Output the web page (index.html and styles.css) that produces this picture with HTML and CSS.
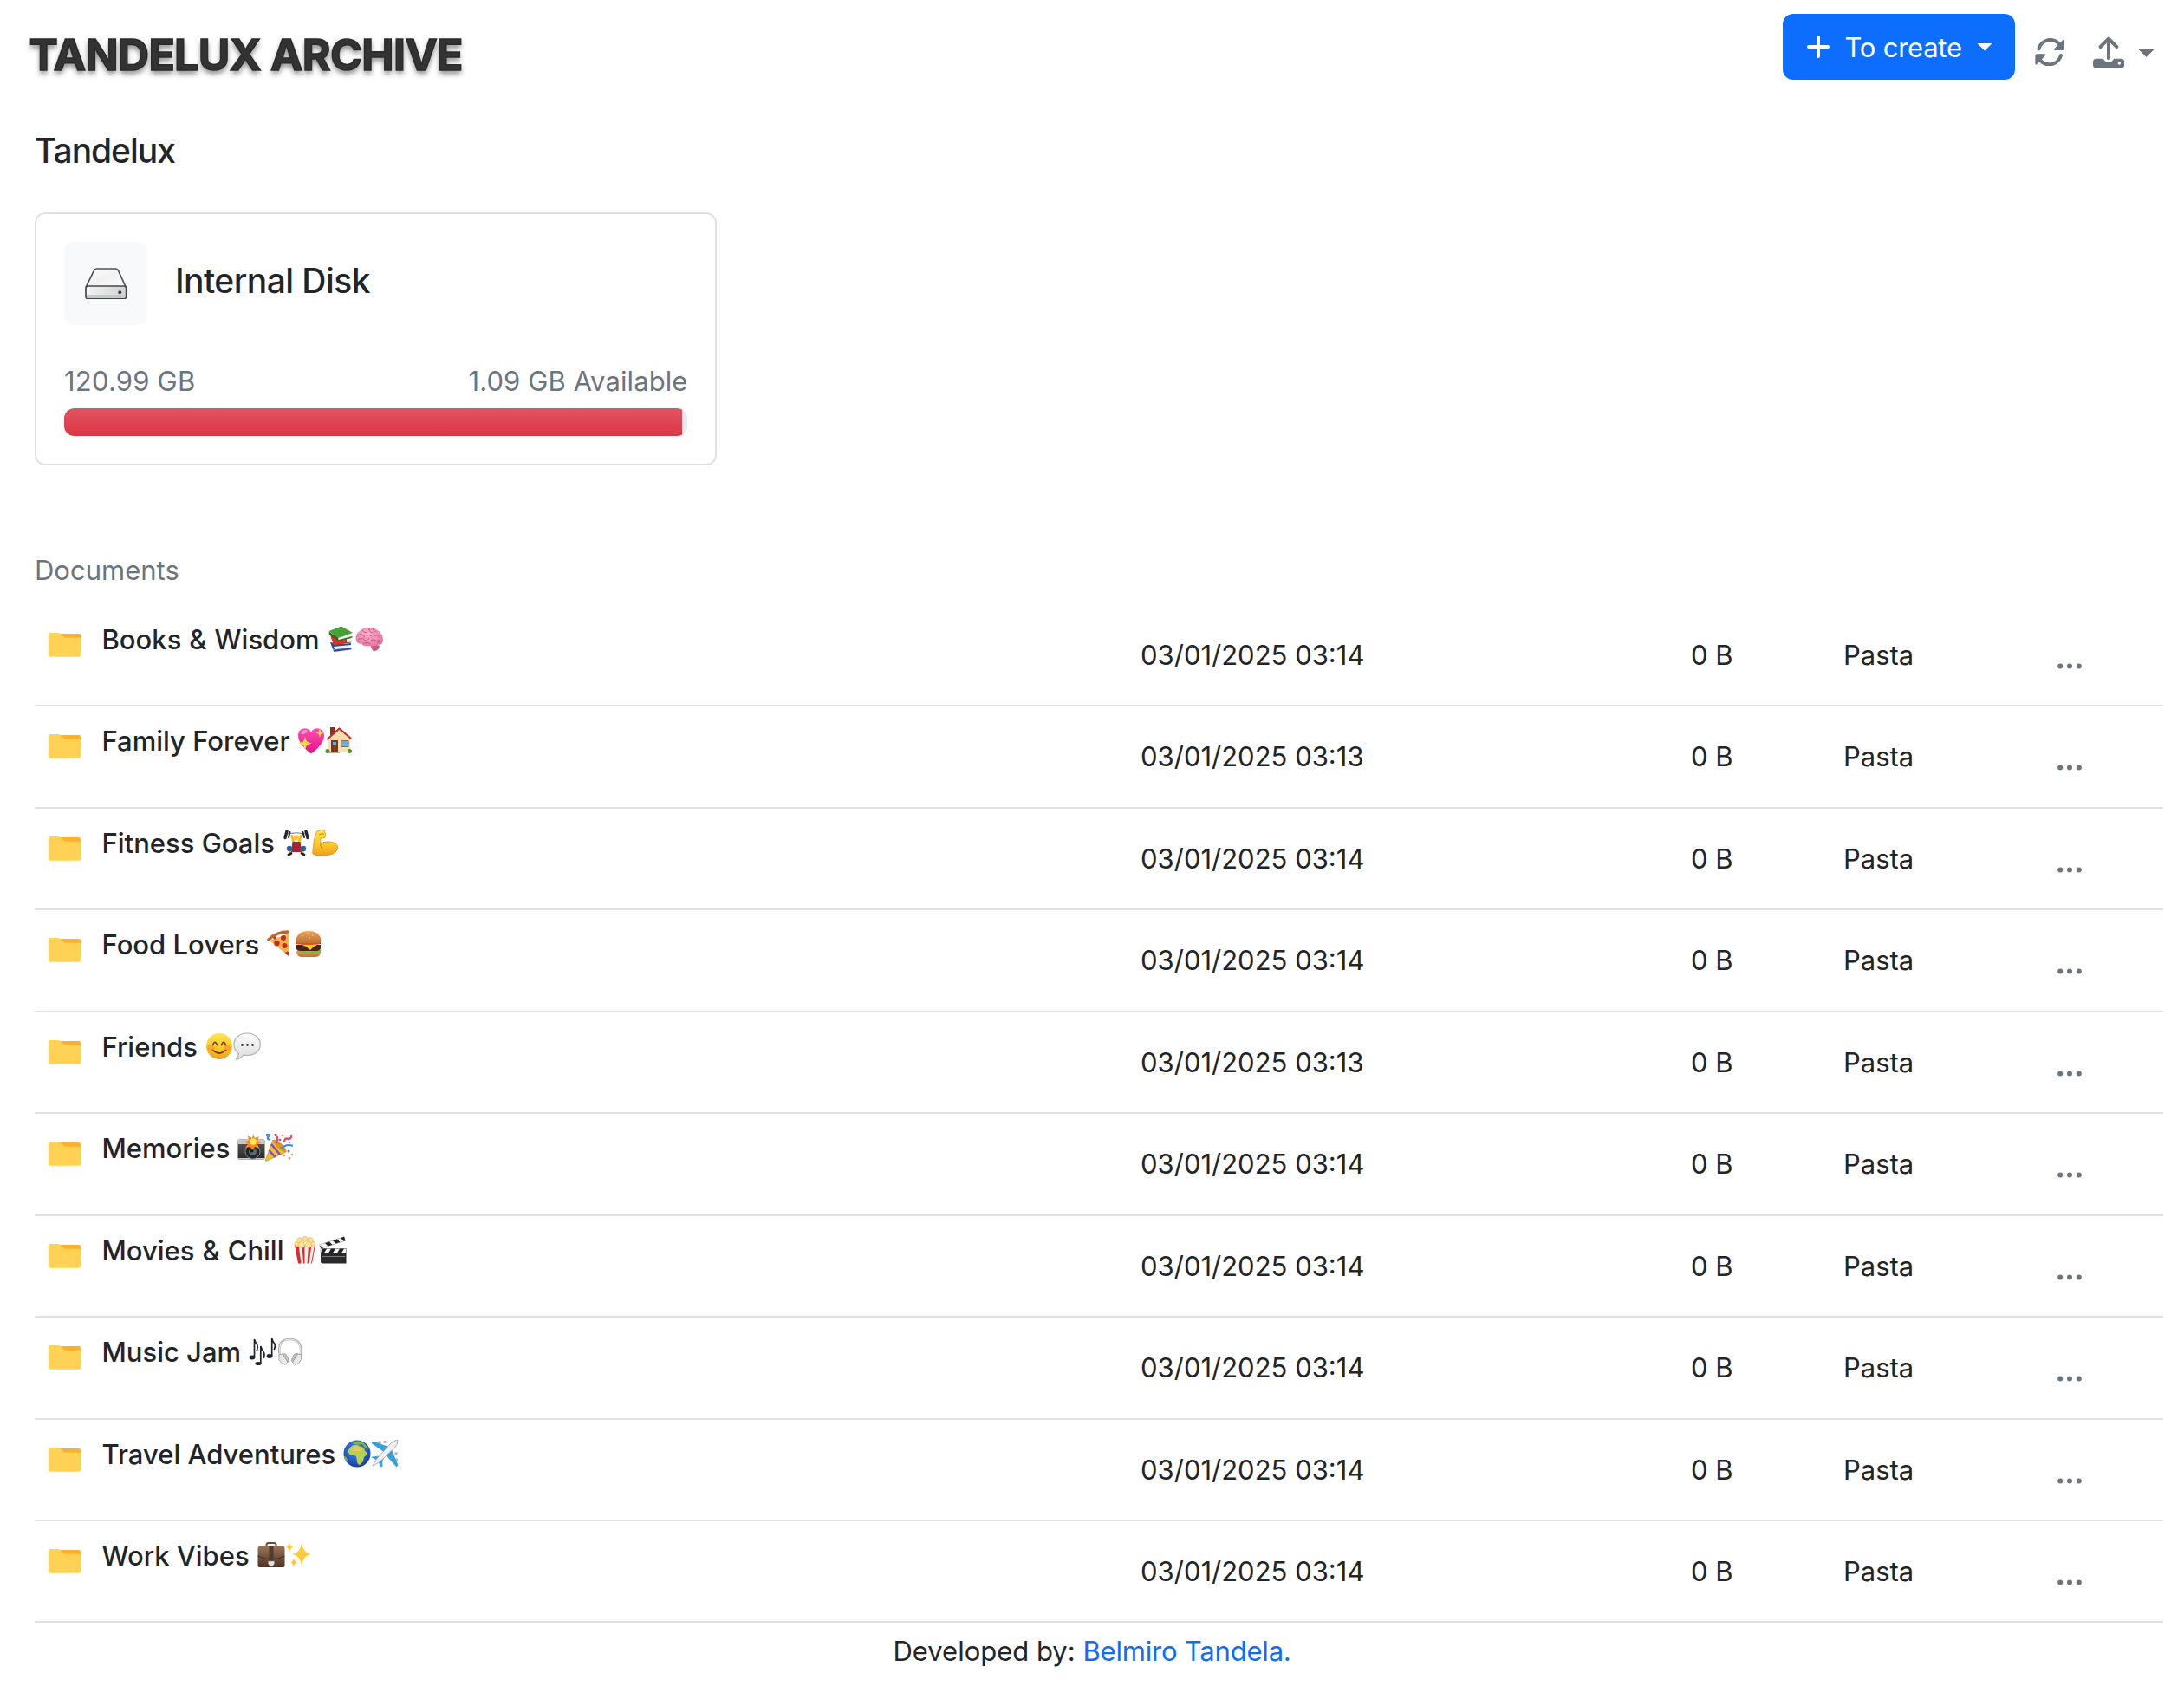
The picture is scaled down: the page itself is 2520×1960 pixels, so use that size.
FILE: index.html
```html
<!DOCTYPE html>
<html lang="en">
<head>
<meta charset="utf-8">
<title>Tandelux Archive</title>
<link rel="stylesheet" href="styles.css">
</head>
<body>
<svg class="sprite" aria-hidden="true">
  <defs>
    <linearGradient id="g-face" x1="0" y1="0" x2="0" y2="1"><stop offset="0" stop-color="#ffe44d"/><stop offset=".6" stop-color="#fdc52c"/><stop offset="1" stop-color="#ee9c1e"/></linearGradient>
    <linearGradient id="g-bun" x1="0" y1="0" x2="0" y2="1"><stop offset="0" stop-color="#eba45a"/><stop offset="1" stop-color="#bf7033"/></linearGradient>
    <linearGradient id="g-case" x1="0" y1="0" x2="0" y2="1"><stop offset="0" stop-color="#97745a"/><stop offset="1" stop-color="#4d3222"/></linearGradient>
    <linearGradient id="g-cam" x1="0" y1="0" x2="0" y2="1"><stop offset="0" stop-color="#5a5a5c"/><stop offset="1" stop-color="#2a2a2c"/></linearGradient>
    <linearGradient id="g-heart" x1="0" y1="0" x2="0" y2="1"><stop offset="0" stop-color="#ff4fb0"/><stop offset="1" stop-color="#e5108c"/></linearGradient>
    <radialGradient id="g-brain" cx=".45" cy=".35" r=".7"><stop offset="0" stop-color="#ffb3cf"/><stop offset="1" stop-color="#e0729c"/></radialGradient>
    <radialGradient id="g-sea" cx=".45" cy=".35" r=".65"><stop offset="0" stop-color="#3f8cf0"/><stop offset="1" stop-color="#1540a8"/></radialGradient>
    <linearGradient id="g-white" x1="0" y1="0" x2="0" y2="1"><stop offset="0" stop-color="#fdfdfd"/><stop offset="1" stop-color="#dcdcde"/></linearGradient>
  </defs>
  <symbol id="folder" viewBox="78 300 111 83.500">
    <path fill="#ffb02a" d="M112 303h71q6 0 6 6v20h-77z"/>
    <path fill="#ffd255" d="M78 306q0-6 6-6h26q6 0 10 4l9 9q4 4 9 4h45q6 0 6 5v55q0 6-6 6H84q-6 0-6-6z"/>
  </symbol>
  <symbol id="dots" viewBox="0 0 28 7"><g fill="#6c757d"><circle cx="3.200" cy="3.500" r="3"/><circle cx="14" cy="3.500" r="3"/><circle cx="24.800" cy="3.500" r="3"/></g></symbol>
  <symbol id="books" viewBox="0 0 32 32">
    <path fill="#2a4f9e" d="M3 20l3 8 21-1v-6l-12 1z"/><path fill="#f3f3f1" d="M7 25l20-2v3.300l-18 1.700z"/><path fill="#2a4f9e" d="M6 28.500l21.500-2v1.800L7.500 31z"/>
    <path fill="#cf2a22" d="M3 11l4 12 20-2.500V13z"/><path fill="#f3eeea" d="M22 16l5-1v4.500l-5 .8z"/><path fill="#d93229" d="M4 14l17 2v5L7 23z"/>
    <path fill="#26691f" d="M1.500 7.500L12 15v3L2 11z"/><path fill="#f2f2ee" d="M12 14.500l16-4.500v3.500L13 18z"/><path fill="#27751f" d="M12 17.200l16.500-4.200v1.500L12.500 18.800z"/><path fill="#46a235" d="M1.500 7L16 1.500 29 9l-17 6z"/>
  </symbol>
  <symbol id="brain" viewBox="0 0 32 32">
    <path fill="#c9587f" d="M17 23q5-2 11 1-1 6-7 6-1 0-3-5z"/>
    <path fill="url(#g-brain)" d="M1 18Q-1 11 5 7 9 2.500 16 3.500 22 2 27 7q5 4 5 10 0 6-6 6-5 3-9 1-8 1-9-2-6 0-7-4z"/>
    <path fill="none" stroke="#c75682" stroke-width="1" stroke-linecap="round" d="M3 12q3-3 6 0m-1-6q2 4 6 2m-11 9q4-3 7 0t6-2M13 12q3-2 6 1m-3-9q-1 4 4 5m0-5q0 3 4 4m-3 5q4-3 7 1m-10 4q4-3 6 1m-15 3q4-4 8 0m8-3q2-3 5 0M10 12v3m14 3q3 1 3 3"/>
  </symbol>
  <symbol id="heart" viewBox="0 0 32 32">
    <path fill="url(#g-heart)" d="M16 31.500C6 24 1 17 1 10.500 1 1.500 12-.5 16 6.500c4-7 15-5 15 4C31 17 26 24 16 31.500z"/>
    <ellipse cx="8" cy="6.500" rx="4" ry="2" fill="#ff8fcb" transform="rotate(-30 8 6.500)"/>
    <path fill="#ffd84a" d="M9 12l2 5.500 6 2-6 2-2 5.500-2-5.500-6-2 6-2zM26 2.500l1.300 3.700L31 7.500l-3.700 1.300L26 12.500l-1.300-3.700L21 7.500l3.700-1.300z"/>
  </symbol>
  <symbol id="house" viewBox="0 0 32 32">
    <path fill="#8d2f26" d="M6 1h6v9H6z"/><path fill="#f7dfb0" d="M4 14L17 3l12 11v16H4z"/>
    <path fill="none" stroke="#c92f29" stroke-width="2.200" stroke-linejoin="round" stroke-linecap="round" d="M3 14.500L16.500 2.500 29.500 13.500"/>
    <path fill="#7b3820" d="M7 16h8v14H7z"/><path fill="#64afe8" d="M9 18h4v4H9zM19.500 17h7v6h-7z"/><path fill="none" stroke="#8b6a48" d="M19 16.500h8v7h-8z"/>
    <path fill="#b9a68b" d="M5 29.500h12V31H5z"/><g fill="#4c942f"><circle cx="3" cy="28.500" r="2.500"/><circle cx="28.500" cy="28.500" r="2.500"/></g>
  </symbol>
  <symbol id="lifter" viewBox="0 0 32 32">
    <path stroke="#777" stroke-width="1" d="M4 6Q16 3.500 28 6" fill="none"/>
    <g stroke="#25282e" stroke-linecap="round"><path stroke-width="3.400" d="M3 10.500L5 3M29 10.500L27 3"/><path stroke-width="2" d="M7 10l1.500-6m16.500 6l-1.500-6"/></g>
    <path fill="none" stroke="#f6b92c" stroke-width="2.600" stroke-linecap="round" d="M10.500 8l2.500 8m8.500-8l-2.500 8"/><circle cx="16" cy="10.500" r="3.200" fill="#ffc62e"/>
    <path fill="#a8232f" d="M11.500 15h9l1.500 12H10z"/><path fill="none" stroke="#f6b92c" stroke-width="2.600" d="M8.500 22v6m15-6v6"/><circle cx="8" cy="23" r="3.200" fill="#2465ad"/><circle cx="24" cy="23" r="3.200" fill="#2465ad"/>
    <path stroke="#222" stroke-width="2.800" stroke-linecap="round" d="M7 30l3-1.500m12 0l3 1.500"/>
  </symbol>
  <symbol id="muscle" viewBox="0 0 32 32">
    <path fill="url(#g-face)" stroke="#dc9218" stroke-width=".8" d="M8 3q4-3 8-1 3 5 1 8-3 2-5 1 0 5-1 8 4-5 10-4 9 0 11 6 0 5-6 8-11 4-21 1-3 0-2-5 1-15 5-22z"/>
    <path fill="none" stroke="#c67c12" d="M10 7q3-2 6-1m-5 13q2 1 2 4"/>
  </symbol>
  <symbol id="pizza" viewBox="0 0 32 32">
    <path fill="#f3b64d" d="M3 12L25 4v26z"/><path fill="none" stroke="#b8692c" stroke-width="3.500" stroke-linecap="round" d="M2 11Q11 2 24.500 2"/>
    <g fill="#c92a22"><circle cx="11.500" cy="15" r="3.200"/><circle cx="19" cy="9" r="3"/><circle cx="20.500" cy="18" r="3"/><path d="M25 25a3.500 3.500 0 0 0-4 1l4 4zM7 9a2.500 2.500 0 0 1 4-1l-2 3z"/></g>
  </symbol>
  <symbol id="burger" viewBox="0 0 32 32">
    <path fill="url(#g-bun)" d="M2 24h28q0 7-6 7H8q-6 0-6-7z"/><path fill="#6fc32b" d="M1.500 22q4 2 7 1l7 2 7-1 8-2-1 4q-5 1-7 0-3 2-6 0-4 1-6 0-5 0-9-4z"/>
    <path fill="#4a2416" d="M2 17h28v4q-1 3-5 3H7q-5 0-5-3z"/><path fill="#ffca28" d="M4 15l24 1-6 3-4 4-5-4z"/><path fill="#e2483a" d="M2 13q14 4 28 0v3q-14 2-28 0z"/>
    <path fill="url(#g-bun)" d="M1.500 13Q2 1 16 1t14.500 12q-2 2-7 2H8q-5 0-6.500-2z"/><g fill="#f9d59a"><circle cx="9" cy="6" r=".8"/><circle cx="15" cy="4" r=".8"/><circle cx="21" cy="6" r=".8"/><circle cx="17" cy="9" r=".8"/></g>
  </symbol>
  <symbol id="smile" viewBox="0 0 32 32">
    <circle cx="16" cy="16" r="15" fill="url(#g-face)"/><g fill="#f4812d" opacity=".45"><ellipse cx="6.500" cy="18" rx="4.500" ry="3.800"/><ellipse cx="25.500" cy="18" rx="4.500" ry="3.800"/></g>
    <path fill="none" stroke="#6b4210" stroke-width="1.700" stroke-linecap="round" d="M8.500 14.500q2.500-6.500 5 0m5 0q2.500-6.500 5 0M8.500 20.500q7.500 7 15 0"/>
  </symbol>
  <symbol id="bubble" viewBox="0 0 32 32">
    <path fill="url(#g-white)" stroke="#b1b1b4" stroke-width="1.200" d="M16 1c9 0 15.300 5.500 15.300 13S25 26.500 16 26.500q-2 0-4-.3-4 4.500-8.500 5 3-3 2.500-7.200Q1 20.500 1 14C1 6.500 7 1 16 1z"/>
    <g fill="#333"><circle cx="10.500" cy="14.500" r="1.400"/><circle cx="16.500" cy="14.500" r="1.400"/><circle cx="22.500" cy="14.500" r="1.400"/></g>
  </symbol>
  <symbol id="camera" viewBox="0 0 32 32">
    <path fill="url(#g-cam)" d="M.5 8Q.5 6.500 2 6.500h28q1.500 0 1.500 1.500v20q0 1.500-1.500 1.500H2Q.5 29.500.5 28z"/><path fill="#c9c9c9" d="M.5 8Q.5 6.500 2 6.500h28q1.500 0 1.500 1.500v4H.5zM.5 28h31q0 1.500-1.500 1.500H2Q.5 29.500.5 28z"/>
    <circle cx="17.500" cy="20.500" r="8.500" fill="#222428" stroke="#85888c"/><circle cx="17.500" cy="20.500" r="4.500" fill="#5e6871"/><circle cx="16.500" cy="19.500" r="2" fill="#111820"/>
    <path fill="#f98a1b" d="M18 0l2 5 5-2-2 5 5 2-5 2 2 5-5-2-3 4-2-4-6 1 3-4-4-3 5-1-1-6 5 3z"/><circle cx="18" cy="9" r="3.800" fill="#ffe65a"/>
  </symbol>
  <symbol id="party" viewBox="0 0 32 32">
    <path fill="#efc12f" stroke="#bd8620" stroke-width=".7" d="M9 7l15 14L1 31.500q-2-.5 0-3z"/><path fill="none" stroke="#8c48c2" stroke-width="2.600" d="M7 12l10 12M4.500 19l7 8"/>
    <ellipse cx="17" cy="14" rx="3.200" ry="10" transform="rotate(-46 17 14)" fill="#d99723"/>
    <path fill="none" stroke="#e64578" stroke-width="2.400" d="M11 0q5 4 2 11M22 10q0-6 4-4 5 0 4-5"/><path fill="none" stroke="#3989dd" stroke-width="2.200" d="M18 17q7-6 14-3M1 1q5-1 3 2-3 2 1 4"/>
    <g><circle cx="17" cy="7" r="1.300" fill="#3a6fd6"/><circle cx="20" cy="2" r="1.300" fill="#e68a2b"/><circle cx="28" cy="10" r="1" fill="#3a6fd6"/><circle cx="27" cy="20" r="1.500" fill="#4576d8"/><circle cx="31" cy="24" r="1.200" fill="#e5993a"/><circle cx="28" cy="28" r="1.500" fill="#ee8ba5"/><circle cx="22" cy="25" r="1.200" fill="#e5993a"/></g>
  </symbol>
  <symbol id="popcorn" viewBox="0 0 32 32">
    <path fill="#f7f0ea" d="M4 10h24l-4 21.500H8z"/><path fill="#d92c31" d="M4 10h4.500L11.500 31.500H8zM12.500 10h3v21.500H14zM20 10h3.500l-3 21.500h-2zM27 10h1l-4 21.500h-1z"/>
    <g fill="#fbe29a" stroke="#e0ad48" stroke-width=".6"><circle cx="7" cy="9" r="3"/><circle cx="25" cy="9" r="3"/><circle cx="10" cy="5" r="3.200"/><circle cx="22" cy="5" r="3.200"/><circle cx="16" cy="3.500" r="3"/><circle cx="12" cy="10" r="3.500"/><circle cx="20" cy="10" r="3.500"/></g>
  </symbol>
  <symbol id="clapper" viewBox="0 0 32 32">
    <path fill="#29292b" d="M2 14.500h29.500V31.500H4q-2 0-2-2z"/><path fill="#f5f5f5" stroke="#777" stroke-width=".5" d="M2 14.500h29.500v5H2zM.5 10L29 .8l1.500 4.400L2.500 14z"/>
    <path fill="#222" d="M4 14.500h5L6 19.500H2zM14 14.500h5l-3 5h-5zM24 14.500h5l-3 5h-5zM7 8l5-1.600 3.500 3.500-5 1.600zM16 5l5-1.600 3.500 3.500-5 1.600zM25 2l4-1.200 1.500 4.400-2 .6zM1 11l4 2-2.500 1.200z"/><path stroke="#999" stroke-width=".7" d="M4 23.500h26M4 27.500h26"/>
  </symbol>
  <symbol id="notes" viewBox="0 0 32 32">
    <g fill="#1d2430"><ellipse cx="4" cy="23" rx="3.400" ry="2.400"/><ellipse cx="11" cy="30" rx="3.600" ry="2"/><ellipse cx="24" cy="21.500" rx="3.400" ry="2.400"/></g>
    <path fill="none" stroke="#1d2430" stroke-width="1.700" d="M6.500 23V2q1 4 3 6 1.500 3-.5 8M13.800 30V10q1 4 3 6 2 3 .5 8M26.700 21.500V1q1 4 3 6 1.500 3-.5 7"/>
  </symbol>
  <symbol id="headphones" viewBox="0 0 32 32">
    <path fill="none" stroke="#b0b1b3" stroke-width="2.600" d="M4 21Q0 2 15.500 2T27.500 21"/><path fill="none" stroke="#ebebed" stroke-width="1" d="M4 19Q1 2 15.500 2T27.500 19"/>
    <g stroke="#999a9c" stroke-width=".8" fill="#e9e9ea"><path d="M3 20l4-1 6 9-3 3.500q-5-1-7-6zM28.500 20l-4-1-6 9 3 3.500q5-1 7-6z"/><path fill="#c4c5c7" d="M7 18.500q4-1 6 4t0 6zM24.500 18.500q-4-1-6 4t0 6z"/></g>
  </symbol>
  <symbol id="earth" viewBox="0 0 32 32">
    <circle cx="16" cy="16" r="15.500" fill="url(#g-sea)"/>
    <path fill="#b8cf55" d="M9 8q3-3 7-2l5 2 3 1 1 4 3 2q-1 3-4 5l-1 5-4 4q-3-1-3-4l-1-6q-3-2-6-1-4-3-3-6z"/><path fill="#dfca62" d="M10 9l6-2 6 3-1 4-10-1z"/><path fill="#86b34a" d="M10 4q8-5 14 0l5 6q-2 1-4-1l-3-4-5 1zM1 19q3 0 4 5l-1 1q-3-3-3-6z"/>
  </symbol>
  <symbol id="plane" viewBox="0 0 32 32">
    <g fill="#b8bcc2"><circle cx="10" cy="3" r="2"/><circle cx="16" cy="2.500" r="1.800"/><circle cx="29" cy="16" r="2"/><circle cx="29.500" cy="23" r="1.800"/></g>
    <path fill="#33a2dc" stroke="#237fb7" stroke-width=".5" d="M1 4l2-2 19 7-5 6zM23 10l8 19-1.500 2L17 17zM1 20l8-1 3 3-4 2zM13 31l-1-7 3-3-2 3z"/>
    <path fill="#33a2dc" d="M12 23l1 8-2 .5L8 23z"/><path fill="#eeeff1" stroke="#8f949b" stroke-width=".7" d="M2 30Q5 23 10 18L23 4q4-4 8-3.500.500 4-3 8L14 22Q9 27 2 30z"/>
  </symbol>
  <symbol id="briefcase" viewBox="0 0 32 32">
    <path fill="none" stroke="#6a4a36" stroke-width="2" d="M10.500 7V4Q10.500 2 13 2h6q2.500 0 2.500 2v3"/><path fill="url(#g-case)" d="M2 6h28q1.500 0 1.500 2v20q0 2-2 2h-27q-2 0-2-2V8q0-2 1.500-2z"/>
    <path fill="none" stroke="#3f281a" d="M.5 17q7 4 15.500 4t15.500-4"/><path fill="#56392a" d="M13.500 6h5v17h-5z"/><path fill="#e0e0e0" stroke="#888" stroke-width=".5" d="M12.500 23h7v3l-2 3h-3l-2-3z"/>
  </symbol>
  <symbol id="sparkles" viewBox="0 0 32 32">
    <path fill="#ffca3a" d="M19 1q1.200 12.500 11 14-9.800 1.500-11 13.500Q17.800 16.500 8 15q9.800-1.500 11-14zM5 1q.6 5.300 4.500 6Q5.600 7.700 5 12.500 4.400 7.700.5 7 4.400 6.300 5 1zM10 19q.6 4.800 4.500 5.500-3.900.7-4.500 5-.6-4.300-4.500-5 3.900-.7 4.500-5.500z"/>
  </symbol>
</svg>

<header class="topbar">
  <h1 class="brand">TANDELUX ARCHIVE</h1>
  <div class="actions">
    <button class="create">
      <svg class="plus" viewBox="0 0 26 26"><path d="M13 2v22M2 13h22"/></svg>
      <span class="create-label">To create</span>
      <span class="caret"></span>
    </button>
    <svg class="refresh" viewBox="983 133 103 96">
      <g class="line"><path d="M996 170C1004 142 1037 129 1062 148L1070 157"/><path d="M1073 193C1065 221 1032 234 1007 215L999 206"/></g>
      <path d="M1080 139q5-3 5 3v28q0 5-5 5h-28q-6 0-2-5zM989 224q-5 3-5-3v-28q0-5 5-5h28q6 0 2 5z"/>
    </svg>
    <svg class="upload" viewBox="1184 126 109 111">
      <path d="M1196 203h24q5 12 18 12t18-12h25q12 0 12 12v9q0 12-12 12h-85q-12 0-12-12v-9q0-12 12-12z"/>
      <circle cx="1275" cy="219" r="5" fill="#fff"/>
      <path class="line" d="M1238 136v66M1210 162l28-28 28 28"/>
    </svg>
    <span class="caret caret-muted"></span>
  </div>
</header>

<main class="content">
  <h2 class="title">Tandelux</h2>
  <section class="disk">
    <div class="disk-head">
      <div class="disk-icon">
        <svg viewBox="203 236 146 110">
          <defs><linearGradient id="g-metal" x1="0" y1="0" x2="1" y2="1"><stop offset="0" stop-color="#fff"/><stop offset=".5" stop-color="#f1f1f1"/><stop offset="1" stop-color="#fff"/></linearGradient>
          <linearGradient id="g-base" x1="0" y1="0" x2="1" y2="0"><stop offset="0" stop-color="#f3f3f3"/><stop offset="1" stop-color="#d2d2d2"/></linearGradient></defs>
          <path fill="url(#g-metal)" stroke="#4c5658" stroke-width="5" d="M206 303l28-57q3-7 9-7h67q6 0 9 7l26 57"/>
          <rect x="206" y="299" width="140" height="44" rx="8" fill="url(#g-base)" stroke="#3f4a4c" stroke-width="5"/>
          <path d="M209 329h134v8q0 4-4 4H213q-4 0-4-4z" fill="#c9c9c9"/><circle cx="324" cy="321" r="6" fill="#3a4446"/>
        </svg>
      </div>
      <h3 class="disk-name">Internal Disk</h3>
    </div>
    <div class="disk-stats"><span class="used">120.99 GB</span><span class="free">1.09 GB Available</span></div>
    <div class="meter"><div class="meter-fill" style="width:99.1%"></div></div>
  </section>
  <h4 class="section">Documents</h4>
  <div class="rows" id="rows"></div>
</main>
<footer class="footer">Developed by: <a>Belmiro Tandela.</a></footer>
<script src="rows.js"></script>
</body>
</html>
```
FILE: styles.css
```css
* { box-sizing: border-box; }
body { margin: 0; width: 2520px; height: 1960px; overflow: hidden; background: #fff; color: #212529; font-family: Inter, "Liberation Sans", sans-serif; font-size: 31px; line-height: 48px; }
h1, h2, h3, h4 { margin: 0; font-weight: 500; font-size: inherit; }
.sprite { position: absolute; width: 0; height: 0; }
.topbar { display: flex; justify-content: space-between; align-items: flex-start; height: 124px; padding: 16px 34.500px 0 33.500px; }
.brand { margin-top: 19px; font-size: 50px; font-weight: 700; line-height: 56px; letter-spacing: -.65px; color: #333; -webkit-text-stroke: 1.500px #2b2b2b; text-shadow: 0 4px 6px rgba(0, 0, 0, .5); white-space: nowrap; }
.actions { display: flex; align-items: flex-start; }
.create { display: flex; align-items: center; width: 268px; height: 76px; padding: 0 26px 0 27.500px; border: 0; border-radius: 12px; background: #0d6efd; color: #fff; font: inherit; }
.plus { width: 26px; height: 26px; fill: none; stroke: #fff; stroke-width: 4; stroke-linecap: round; }
.create-label { margin-left: 18px; padding-top: 2px; letter-spacing: -.25px; white-space: nowrap; }
.caret { width: 18px; height: 9px; margin-left: auto; background: currentColor; clip-path: polygon(0 0, 100% 0, 50% 100%); }
.caret-muted { margin: 41px 0 0 16.500px; color: #6c757d; }
.refresh { width: 34.300px; height: 32px; margin: 28.300px 0 0 22.700px; fill: #6c757d; }
.upload { width: 36.300px; height: 37px; margin: 26px 0 0 32.700px; fill: #6c757d; }
.line { fill: none; stroke: #6c757d; stroke-width: 12; stroke-linecap: round; stroke-linejoin: round; }
.content { padding: 0 24px 0 40px; }
.title { height: 121px; padding-top: 26px; font-size: 39px; letter-spacing: -1.050px; }
.disk { width: 787px; height: 292px; padding: 32px; border: 2px solid #dee2e6; border-radius: 12px; }
.disk-head { display: flex; gap: 32px; height: 96px; }
.disk-icon { display: grid; place-items: center; width: 96px; height: 96px; border-radius: 12px; background: #f8f9fa; }
.disk-icon svg { width: 48.600px; height: 36.700px; }
.disk-name { padding-top: 21px; font-size: 39px; letter-spacing: -.550px; }
.disk-stats { display: flex; justify-content: space-between; margin-top: 41px; color: #6c757d; }
.used { letter-spacing: .2px; }
.free { letter-spacing: .1px; margin-right: -.500px; }
.meter { height: 32px; margin-top: 7px; border-radius: 12px; background: #e9ecef; overflow: hidden; }
.meter-fill { height: 100%; background: #dc3545 linear-gradient(180deg, rgba(255, 255, 255, .15), rgba(255, 255, 255, 0)); }
.section { margin-top: 97px; height: 64px; font-weight: 400; color: #6c757d; }
.row { display: grid; grid-template-columns: 77.500px 1198.500px 635px 176px 246.500px 1fr; height: 117.440px; border-bottom: 2px solid #dee2e6; }
.folder { width: 37px; height: 28px; margin: 32px 0 0 16px; }
.name { display: flex; padding-top: 16px; font-weight: 500; white-space: nowrap; }
.name svg { width: 32px; height: 32px; margin-top: 7px; }
.name svg:nth-of-type(1) { margin-left: 9px; }
.amp { padding: 0 .7px; }
.cell { padding-top: 34px; white-space: nowrap; }
.dots { width: 28px; height: 7px; margin-top: 67px; }
.footer { padding-top: 9px; text-align: center; }
.footer a { color: #0d6efd; letter-spacing: -.2px; }
```
FILE: rows.js
```javascript
const documents = [
  ["Books & Wisdom", "books", "brain", "03/01/2025 03:14"],
  ["Family Forever", "heart", "house", "03/01/2025 03:13"],
  ["Fitness Goals", "lifter", "muscle", "03/01/2025 03:14"],
  ["Food Lovers", "pizza", "burger", "03/01/2025 03:14"],
  ["Friends", "smile", "bubble", "03/01/2025 03:13"],
  ["Memories", "camera", "party", "03/01/2025 03:14"],
  ["Movies & Chill", "popcorn", "clapper", "03/01/2025 03:14"],
  ["Music Jam", "notes", "headphones", "03/01/2025 03:14"],
  ["Travel Adventures", "earth", "plane", "03/01/2025 03:14"],
  ["Work Vibes", "briefcase", "sparkles", "03/01/2025 03:14"],
];
const icon = (id, cls = "emoji") => `<svg class="${cls}"><use href="#${id}"/></svg>`;
document.getElementById("rows").innerHTML = documents.map(([name, first, second, date]) => `
  <div class="row">
    ${icon("folder", "folder")}
    <div class="name"><span>${name.replace("&", '<span class="amp">&amp;</span>')}</span>${icon(first)}${icon(second)}</div>
    <div class="cell">${date}</div>
    <div class="cell">0 B</div>
    <div class="cell">Pasta</div>
    ${icon("dots", "dots")}
  </div>`).join("");
```
